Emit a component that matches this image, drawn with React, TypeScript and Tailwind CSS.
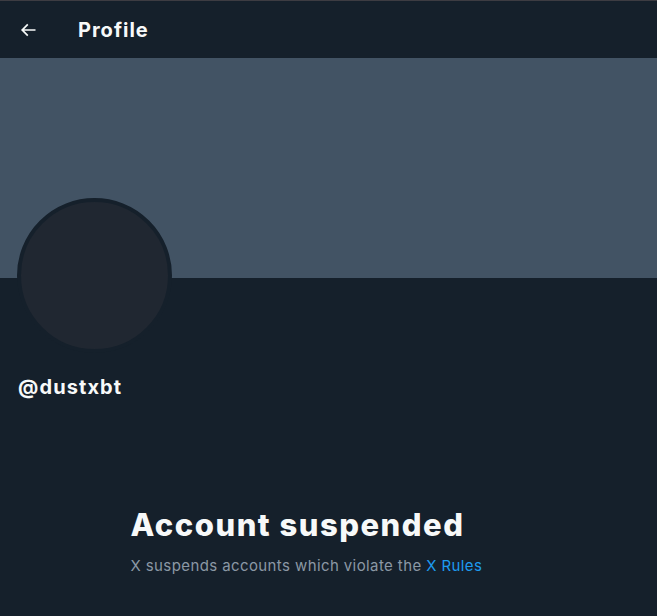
export default function App() {
  return (
    <div className="w-[657px] h-[616px] overflow-hidden bg-[#15202b] border-t border-[#3d3c42] font-['Inter','Noto_Sans',sans-serif] text-[#f7f9f9]">
      {/* Top bar */}
      <header className="h-[57px] flex items-center px-4">
        <div className="w-[56px] flex items-center">
          <svg viewBox="0 0 24 24" className="w-5 h-5 ml-[2px] fill-[#f7f9f9]">
            <path d="M7.414 13l5.043 5.04-1.414 1.42L3.586 12l7.457-7.46 1.414 1.42L7.414 11H21v2H7.414z" />
          </svg>
        </div>
        <h1 className="ml-[6px] text-[20px] font-bold leading-6 tracking-[1px]">Profile</h1>
      </header>

      {/* Banner */}
      <div className="h-[220px] bg-[#425364]" />

      {/* Avatar */}
      <div className="-mt-[80px] ml-[17px] w-[155px] h-[155px] rounded-full border-4 border-[#15202b] bg-[#202731]" />

      {/* Handle */}
      <div className="ml-[18px] mt-[22px] text-[20px] font-bold leading-6 tracking-[1.1px]">@dustxbt</div>

      {/* Suspended notice */}
      <div className="w-[400px] mx-auto mt-[108px] pl-[2px]">
        <h2 className="text-[31px] font-extrabold leading-9 tracking-[1.5px]">Account suspended</h2>
        <p className="mt-[13px] text-[15px] leading-5 tracking-[0.4px] text-[#8b98a5]">
          X suspends accounts which violate the <span className="text-[#1d9bf0]">X Rules</span>
        </p>
      </div>
    </div>
  );
}
